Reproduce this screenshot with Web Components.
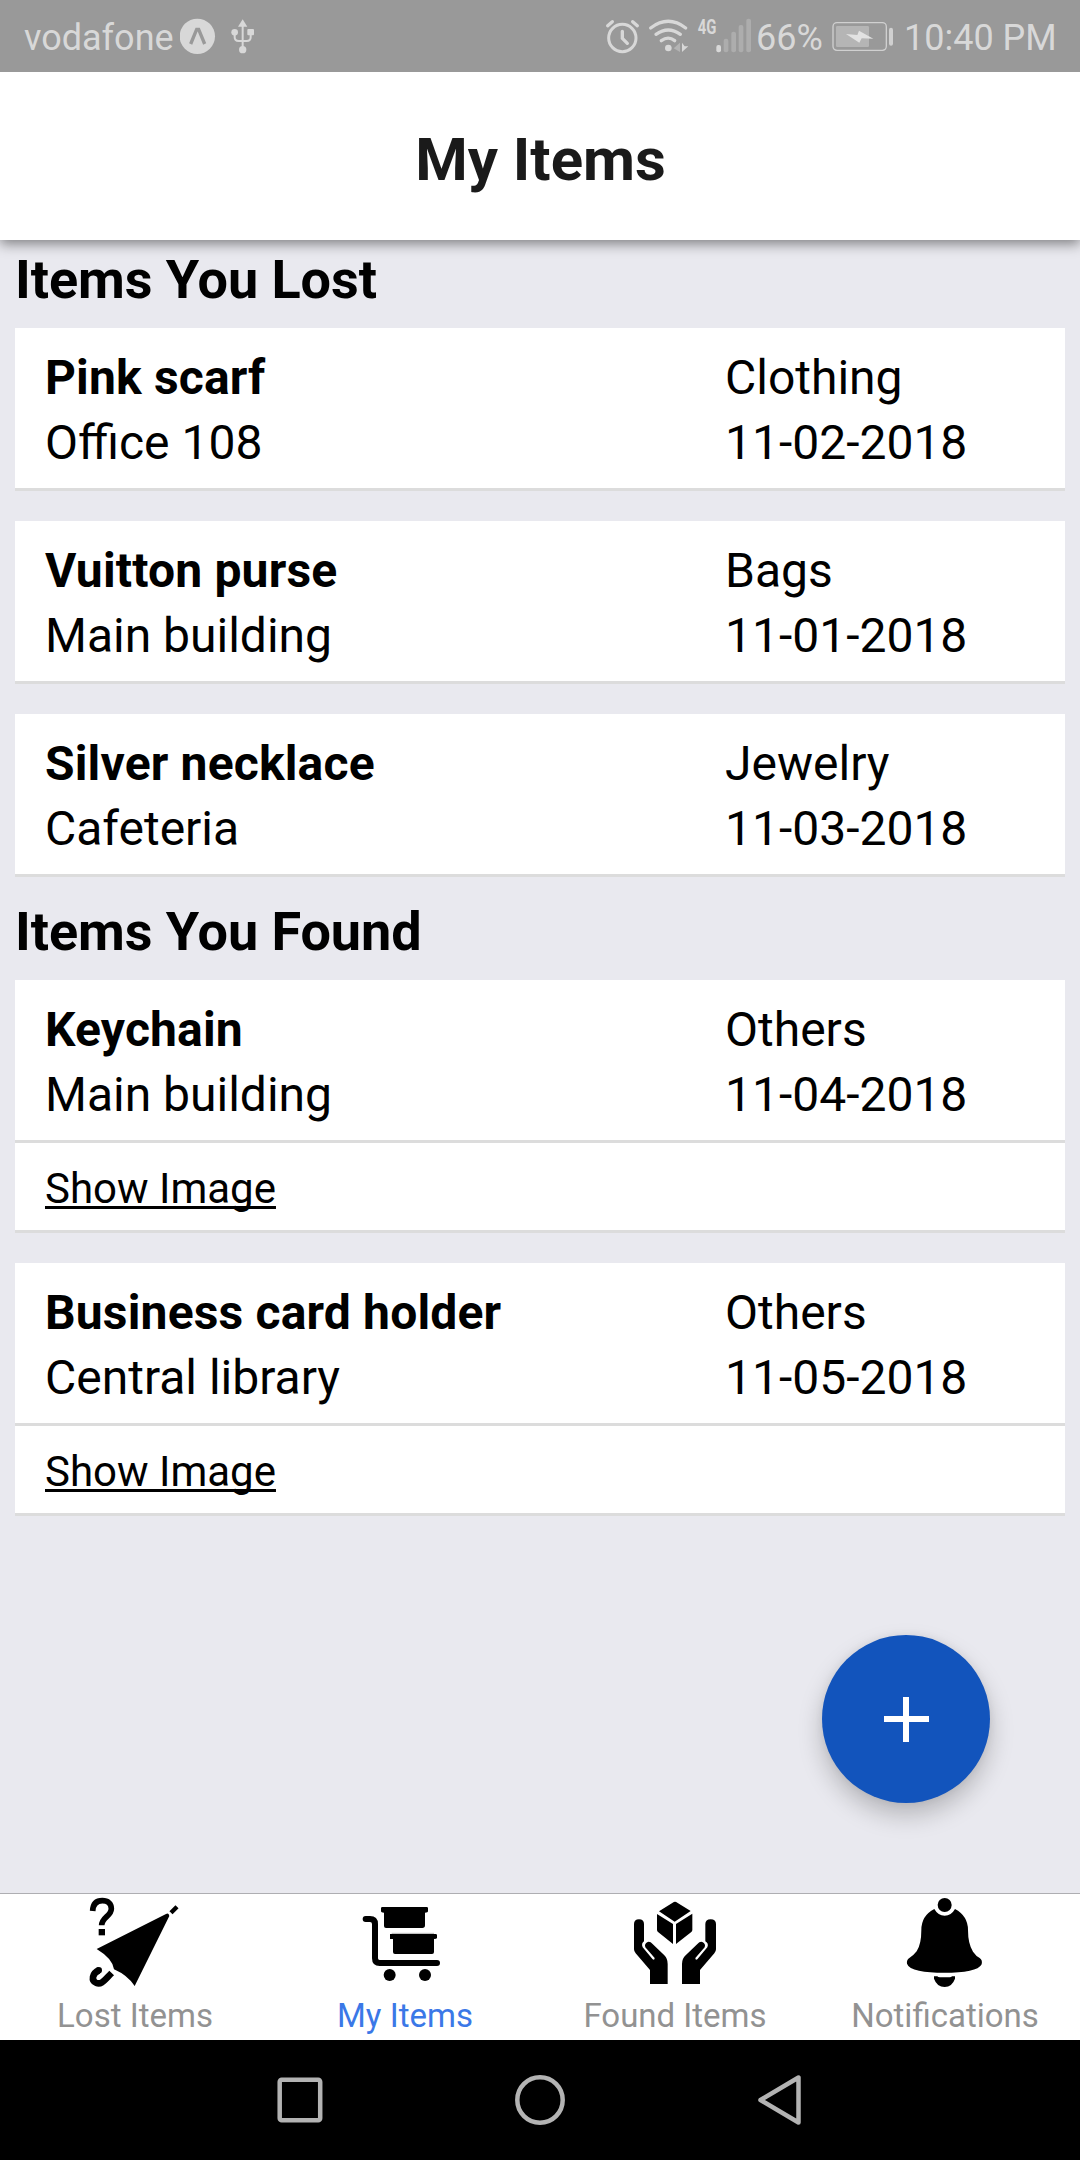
<!DOCTYPE html>
<html lang="en">
<head>
<meta charset="utf-8">
<title>My Items</title>
<style>
html,body{margin:0;padding:0}
body{width:1080px;height:2160px;overflow:hidden;font-family:Roboto,"Liberation Sans",sans-serif;color:#000;background:#e9e9ef}
</style>
</head>
<body>
<my-items-app></my-items-app>
<script>
function define(name, html) {
  const t = document.createElement('template');
  t.innerHTML = html;
  customElements.define(name, class extends HTMLElement {
    constructor() {
      super();
      this.attachShadow({mode: 'open'}).appendChild(t.content.cloneNode(true));
    }
  });
}

define('status-bar', `
<style>
:host{display:flex;height:72px;background:#999;color:#d8d8d8;font-size:36px;line-height:72px;white-space:nowrap;flex:none;position:relative;z-index:2}
svg{display:block;flex:none}
.carrier{width:156px;padding-left:24px}
.grow{flex:1}
.pct{width:72px}
.time{width:176px}
.carrier span,.pct span,.time span{display:block;padding-top:2px;line-height:72px;height:70px}
</style>
<div class="carrier"><span>vodafone</span></div>
<svg width="90" height="72" viewBox="540 0 270 216">
  <circle cx="592" cy="109" r="53" fill="#d8d8d8"/>
  <path d="M572 132L590 88H596L614 132" fill="none" stroke="#999" stroke-width="10"/>
  <g fill="none" stroke="#d8d8d8" stroke-width="6"><path d="M728 72V150M704 98V112Q704 123 716 123H740Q752 123 752 112V98"/></g>
  <g fill="#d8d8d8"><path d="M728 58L742 80H714Z"/><circle cx="704" cy="97" r="10"/><rect x="742" y="87" width="20" height="19" rx="3"/><circle cx="728" cy="149" r="11"/></g>
</svg>
<div class="grow"></div>
<svg width="166" height="72" viewBox="0 0 498 216">
  <g fill="none" stroke="#d8d8d8" stroke-linecap="round">
    <circle cx="97" cy="114" r="41" stroke-width="9"/>
    <path d="M97 94V115L112 130" stroke-width="10"/>
    <path d="M53 77L67 65M142 77L128 65" stroke-width="10" />
    <path d="M182 84Q235 44 287 84M198 103Q235 77 271 103M214 122Q235 107 254 122" stroke-width="10"/>
  </g>
  <circle cx="235" cy="144" r="10" fill="#d8d8d8"/>
  <path d="M270 128V156L251 145Z" fill="#b4b4b4"/>
  <path d="M276 128L284 139H295L276 156Z" fill="#d8d8d8"/>
  <text x="323" y="101" font-family="Roboto" font-weight="700" font-size="61" textLength="56" lengthAdjust="spacingAndGlyphs" fill="#d8d8d8">4G</text>
  <rect x="379" y="135" width="14" height="22" rx="6" fill="#d8d8d8"/>
  <g fill="#adadad"><rect x="401" y="116" width="14" height="41" rx="6"/><rect x="424" y="95" width="14" height="62" rx="6"/><rect x="446" y="75" width="14" height="82" rx="6"/><rect x="469" y="56" width="14" height="101" rx="6"/></g>
</svg>
<div class="pct"><span>66%</span></div>
<svg width="76" height="72" viewBox="714 0 228 216">
  <rect x="729" y="68" width="160" height="83" rx="12" fill="none" stroke="#d0d0d0" stroke-width="4"/>
  <rect x="738" y="78" width="99" height="63" rx="4" fill="#b5b5b5"/>
  <path d="M768 102L802 105L807 92L850 116L815 115L808 128Z" fill="#e2e2e2"/>
  <rect x="897" y="83" width="12" height="54" rx="6" fill="#d0d0d0"/>
</svg>
<div class="time"><span>10:40 PM</span></div>
`);

define('app-header', `
<style>
:host{display:flex;height:168px;flex:none;align-items:center;justify-content:center;background:#fff;box-shadow:0 4px 12px rgba(0,0,0,.45);position:relative;z-index:1;font-size:60px;font-weight:700;color:#1a1a1a;padding:6px 0 0 1px;box-sizing:border-box}
</style><slot></slot>`);

define('item-section', `
<style>
:host{display:flex;flex-direction:column;padding:8px 15px 0}
:host(.next){padding-top:23px}
h2{margin:0;height:80px;font-size:54px;line-height:63px;font-weight:700;white-space:nowrap;letter-spacing:-.06px}
.cards{display:flex;flex-direction:column;gap:30px}
</style><h2><slot name="title"></slot></h2><div class="cards"><slot></slot></div>`);

define('item-card', `
<style>
:host{display:block;background:#fff}
.body{display:flex;padding:17px 30px 0;box-sizing:border-box;border-bottom:3px solid #dcdcdc;height:163px;font-size:48px;line-height:65px;white-space:nowrap}
.l{width:680px}
.n{font-weight:700;letter-spacing:.17px}
</style>
<div class="body"><div class="l"><div class="n"><slot name="name"></slot></div><div><slot name="place"></slot></div></div>
<div><div><slot name="kind"></slot></div><div><slot name="date"></slot></div></div></div><slot></slot>`);

define('show-link', `
<style>
:host{display:block;height:90px;box-sizing:border-box;border-bottom:3px solid #dcdcdc;padding:21px 30px 0;font-size:42px;line-height:50px}
span{text-decoration:underline;text-decoration-thickness:3px;text-underline-offset:3px;text-decoration-skip-ink:none}
</style><span><slot></slot></span>`);

define('fab-button', `
<style>
:host{display:flex;position:absolute;left:822px;top:1635px;width:168px;height:168px;border-radius:50%;background:#1254bc;align-items:center;justify-content:center;box-shadow:0 12px 24px rgba(0,0,0,.22),0 0 8px rgba(0,0,0,.06)}
svg{display:block}
</style><svg width="45" height="45" viewBox="0 0 45 45"><path d="M19 0h6v19H45v6H25V45h-6V25H0v-6h19z" fill="#fff"/></svg>`);

define('tab-item', `
<style>
:host{display:flex;flex:1;flex-direction:column;align-items:center;color:#929292;font-size:33px;line-height:39px;white-space:nowrap}
:host(.on){color:#3b78e7}
.icon{display:flex;height:102px}
</style><div class="icon"><slot name="icon"></slot></div><div><slot></slot></div>`);

define('tab-bar', `
<style>
:host{display:flex;height:147px;box-sizing:border-box;border-top:1px solid #aeaeb2;background:#fff;flex:none}
svg{display:block;width:130px;height:100px}
</style>
<tab-item><svg slot="icon" viewBox="30 42 390 300">
  <path d="M98 93C99 71 110 62 127 62C144 62 154 71 154 86C154 108 125 112 125 136" fill="none" stroke="#000" stroke-width="17"/>
  <rect x="116" y="147" width="19" height="19"/>
  <path d="M110 207L318 102Q326 98 328 108L224 318Q203 286 162 268Q158 236 110 207Z"/>
  <path d="M333 98L351 80" stroke="#000" stroke-width="13"/>
  <path d="M117 271C96 279 93 303 109 309C124 315 132 302 155 279" fill="none" stroke="#000" stroke-width="20"/><circle cx="116" cy="271" r="10"/>
</svg>Lost Items</tab-item>
<tab-item class="on"><svg slot="icon" viewBox="0 42 390 300">
  <path d="M77 117H90Q105 117 105 132V235Q105 249 119 249H291" fill="none" stroke="#000" stroke-width="18" stroke-linecap="round"/>
  <path d="M127 81H260Q264 81 264 85V93Q264 98 255 98V136Q255 144 247 144H138Q132 144 132 138V98Q123 98 123 93V85Q123 81 127 81Z"/>
  <path d="M150 162H287Q291 162 291 166V173Q291 177 282 177V216Q282 222 276 222H165Q159 222 159 216V177H150Z"/>
  <path d="M155 160H282" stroke="#b5b5b5" stroke-width="3"/>
  <circle cx="149" cy="285" r="18"/><circle cx="255" cy="285" r="18"/>
</svg>My Items</tab-item>
<tab-item><svg slot="icon" viewBox="0 42 390 300">
  <path d="M188 68Q195 63 202 68L242 93L194 125L147 94Z"/>
  <path d="M141 102L189 132V192L145 157Q141 154 141 150Z"/><path d="M247 101L198 132V192L243 157Q247 154 247 150Z"/>
  <path d="M72 132Q72 118 87 118Q102 118 102 132V184Q93 190 98 202L128 238Q134 241 134 234L106 202Q102 191 113 186Q121 184 127 191L163 226Q173 236 173 252V312H120V270L77 220Q72 214 72 208Z"/>
  <path d="M318 132Q318 118 302 118Q286 118 286 132V184Q297 190 292 202L262 238Q256 241 256 234L284 202Q288 191 277 186Q269 184 263 191L227 226Q216 236 216 252V312H270V270L313 220Q318 214 318 208Z"/>
</svg>Found Items</tab-item>
<tab-item><svg slot="icon" viewBox="0 42 390 300">
  <circle cx="194" cy="75" r="21"/>
  <path d="M163 87Q174 107 194 107Q214 107 225 87Q264 108 264 150Q264 192 279 215Q288 228 299 234Q308 240 305 253Q298 267 269 272Q239 278 193 278Q147 278 117 272Q86 266 81 251Q79 240 88 234Q99 228 110 214Q124 193 124 150Q124 107 163 87Z"/>
  <path d="M162 289H172Q174 292 180 292H209Q214 292 216 289H225V296Q216 321 194 321Q171 321 162 296Z"/>
</svg>Notifications</tab-item>`);

define('nav-bar', `
<style>
:host{display:flex;height:120px;flex:none;background:#000;justify-content:center}
svg{display:block}
</style>
<svg width="600" height="120" viewBox="240 2040 600 120" fill="none" stroke="#b3b3b3" stroke-width="4.5" stroke-linejoin="round">
<rect x="279.7" y="2079.7" width="40.5" height="40.5" rx="2"/><circle cx="540" cy="2100" r="22.7"/><path d="M798.5 2077.5V2122.5L760.5 2100Z"/>
</svg>`);

const card = (n, p, k, d, img) => `<item-card><span slot="name">${n}</span><span slot="place">${p}</span><span slot="kind">${k}</span><span slot="date">${d}</span>${img ? '<show-link>Show Image</show-link>' : ''}</item-card>`;

define('my-items-app', `
<style>
:host{display:flex;flex-direction:column;width:1080px;height:2160px;background:#e9e9ef;position:relative;overflow:hidden}
main{flex:1;min-height:0}
</style>
<status-bar></status-bar>
<app-header>My Items</app-header>
<main>
<item-section><span slot="title">Items You Lost</span>
${card('Pink scarf','Office 108','Clothing','11-02-2018')}
${card('Vuitton purse','Main building','Bags','11-01-2018')}
${card('Silver necklace','Cafeteria','Jewelry','11-03-2018')}
</item-section>
<item-section class="next"><span slot="title">Items You Found</span>
${card('Keychain','Main building','Others','11-04-2018',true)}
${card('Business card holder','Central library','Others','11-05-2018',true)}
</item-section>
</main>
<fab-button></fab-button>
<tab-bar></tab-bar>
<nav-bar></nav-bar>`);
</script>
</body>
</html>
